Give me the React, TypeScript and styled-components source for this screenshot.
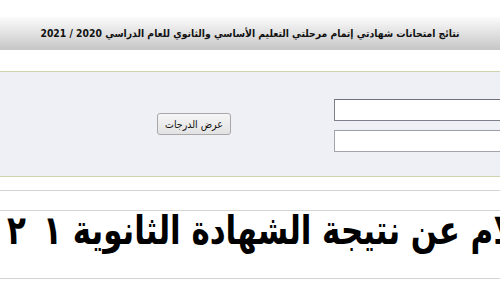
import React from "react";
import styled, { createGlobalStyle } from "styled-components";

const Global = createGlobalStyle`
  html, body { margin: 0; padding: 0; background: #ffffff; overflow: hidden; }
  body { width: 500px; height: 300px; font-family: "DejaVu Sans Condensed", "DejaVu Sans", sans-serif; }
`;

const Page = styled.div`
  width: 500px;
  height: 300px;
  overflow: hidden;
  display: flex;
  flex-direction: column;
`;

const Header = styled.header`
  margin-top: 17px;
  height: 33px;
  background: linear-gradient(to bottom, #fbfbfb 0%, #e6e6e6 40%, #c6c6c6 100%);
  display: flex;
  align-items: center;
  justify-content: center;
`;

const HeaderTitle = styled.h1`
  margin: 0 0 2px 0;
  font-family: "DejaVu Sans Condensed", "DejaVu Sans", sans-serif;
  font-size: 10.3px;
  font-weight: bold;
  color: #111;
  direction: rtl;
  white-space: nowrap;
`;

const Panel = styled.section`
  margin-top: 21px;
  height: 104px;
  border-top: 1px solid #cfd4ad;
  border-bottom: 1px solid #cfd4ad;
  background: #eef0f5;
  display: flex;
  align-items: flex-start;
  padding-left: 157px;
  box-sizing: content-box;
`;

const ShowButton = styled.button`
  flex-shrink: 0;
  margin-top: 41px;
  width: 74px;
  height: 22px;
  border: 1px solid #a8a8a8;
  border-radius: 3px;
  background: linear-gradient(to bottom, #f6f6f6, #e2e2e2);
  font-family: "DejaVu Sans Condensed", "DejaVu Sans", sans-serif;
  font-size: 10.5px;
  color: #111;
  padding: 0;
  white-space: nowrap;
  direction: rtl;
`;

const Fields = styled.div`
  flex-shrink: 0;
  margin-left: 103px;
  margin-top: 27px;
  display: flex;
  flex-direction: column;
  gap: 9px;
`;

const TextInput = styled.input<{ $dark?: boolean }>`
  width: 200px;
  height: 22px;
  box-sizing: border-box;
  border: 1px solid ${(p) => (p.$dark ? "#7d7f8c" : "#a2a4ae")};
  border-top-color: ${(p) => (p.$dark ? "#6f717e" : "#9a9ca6")};
  background: #ffffff;
  margin: 0;
  padding: 0;
  outline: none;
`;

const Rule = styled.hr<{ $gap: number }>`
  margin: ${(p) => p.$gap}px 0 0 0;
  border: 0;
  height: 1px;
  flex-shrink: 0;
  background: #d4d4d4;
`;

const BigBand = styled.div`
  height: 67px;
  flex-shrink: 0;
  overflow: hidden;
  display: flex;
  align-items: flex-start;
  padding-left: 7px;
`;

const BigTitle = styled.h2`
  margin: 0;
  font-family: "DejaVu Sans Condensed", "DejaVu Sans", sans-serif;
  font-size: 40px;
  line-height: 0.95;
  font-weight: bold;
  color: #000;
  white-space: nowrap;
  direction: rtl;
  unicode-bidi: isolate;
  transform: scaleX(0.86);
  transform-origin: left top;
`;

const Digit = styled.span<{ $gap?: number }>`
  margin-left: ${(p) => p.$gap ?? 0}px;
`;

export default function App() {
  return (
    <>
      <Global />
      <Page>
        <Header>
          <HeaderTitle>نتائج امتحانات شهادتي إتمام مرحلتي التعليم الأساسي والثانوي للعام الدراسي 2020 / 2021</HeaderTitle>
        </Header>
        <Panel>
          <ShowButton>عرض الدرجات</ShowButton>
          <Fields>
            <TextInput $dark />
            <TextInput />
          </Fields>
        </Panel>
        <Rule $gap={13} />
        <Rule $gap={19} />
        <BigBand>
          <BigTitle>
            الاستعلام عن نتيجة الشهادة الثانوية{"  "}
            <Digit>٢</Digit>
            <Digit $gap={20}>١</Digit>
          </BigTitle>
        </BigBand>
        <Rule $gap={0} />
      </Page>
    </>
  );
}
